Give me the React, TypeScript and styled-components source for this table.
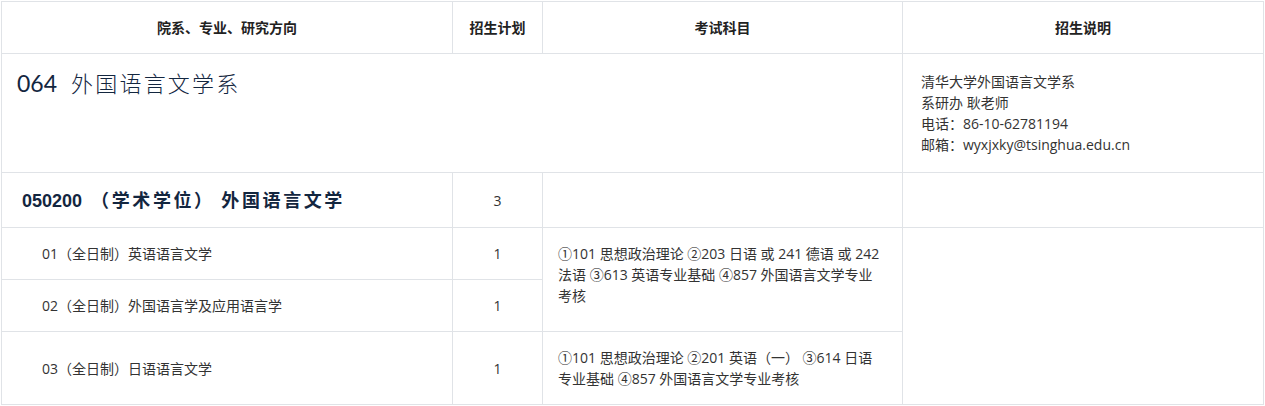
import React from "react";
import styled, { createGlobalStyle } from "styled-components";

const Global = createGlobalStyle`
  html, body { margin: 0; padding: 0; background: #fff; }
  body { font-family: "Open Sans", "Noto Sans CJK SC", sans-serif; }
`;

const Page = styled.div`
  padding: 1px 0 0 1px;
`;

const Table = styled.div`
  display: grid;
  grid-template-columns: 450px 89px 359px 360px;
  grid-template-rows: 51px 118px 54px 51px 51px 72px;
  gap: 1px;
  padding: 1px;
  width: max-content;
  background: #e0e3e7;
`;

type CellProps = { $col: string; $row: string; $align?: "left" | "center"; $valign?: "start" | "center"; $pad?: string };

const Cell = styled.div<CellProps>`
  grid-column: ${(p) => p.$col};
  grid-row: ${(p) => p.$row};
  background: #fff;
  display: flex;
  flex-direction: column;
  justify-content: ${(p) => (p.$valign === "start" ? "flex-start" : "center")};
  align-items: ${(p) => (p.$align === "center" ? "center" : "flex-start")};
  text-align: ${(p) => p.$align ?? "left"};
  padding: ${(p) => p.$pad ?? "0"};
  box-sizing: border-box;
  color: #333;
  font-size: 14px;
  line-height: 21px;
  min-width: 0;
`;

const HeadText = styled.span`
  font-weight: 700;
  font-size: 14px;
  color: #222;
`;

const DeptTitle = styled.div`
  font-size: 22px;
  line-height: 32px;
  color: #13263f;
  font-weight: 400;
`;

const DeptCode = styled.span`
  font-family: Lato, "Noto Sans CJK SC", sans-serif;
  font-size: 23px;
  margin-right: 14px;
`;

const DeptName = styled.span`
  font-family: "Noto Sans CJK SC", sans-serif;
  font-weight: 300;
  letter-spacing: 2.2px;
`;

const MajorTitle = styled.div`
  font-size: 18px;
  line-height: 26px;
  font-weight: 700;
  color: #13263f;
  font-family: "Liberation Sans", "Noto Sans CJK SC", sans-serif;
  white-space: nowrap;
`;

const MajorName = styled.span`
  font-family: "Noto Sans CJK SC", sans-serif;
  letter-spacing: 2.6px;
  margin-left: 4px;
`;

const Line = styled.div``;

export default function App() {
  return (
    <>
      <Global />
      <Page>
        <Table>
          <Cell $col="1" $row="1" $align="center"><HeadText>院系、专业、研究方向</HeadText></Cell>
          <Cell $col="2" $row="1" $align="center"><HeadText>招生计划</HeadText></Cell>
          <Cell $col="3" $row="1" $align="center"><HeadText>考试科目</HeadText></Cell>
          <Cell $col="4" $row="1" $align="center"><HeadText>招生说明</HeadText></Cell>

          <Cell $col="1 / span 3" $row="2" $valign="start" $pad="12px 15px">
            <DeptTitle>
              <DeptCode>064</DeptCode>
              <DeptName>外国语言文学系</DeptName>
            </DeptTitle>
          </Cell>
          <Cell $col="4" $row="2" $pad="0 18px">
            <Line>清华大学外国语言文学系</Line>
            <Line>系研办 耿老师</Line>
            <Line>电话：86-10-62781194</Line>
            <Line>邮箱：wyxjxky@tsinghua.edu.cn</Line>
          </Cell>

          <Cell $col="1" $row="3" $pad="0 20px">
            <MajorTitle>
              050200 <MajorName>（学术学位） 外国语言文学</MajorName>
            </MajorTitle>
          </Cell>
          <Cell $col="2" $row="3" $align="center">3</Cell>
          <Cell $col="3" $row="3" />
          <Cell $col="4" $row="3" />

          <Cell $col="1" $row="4" $pad="0 40px">01（全日制）英语语言文学</Cell>
          <Cell $col="2" $row="4" $align="center">1</Cell>
          <Cell $col="3" $row="4 / span 2" $pad="0 15px 11px 15px">
            <Line>①101 思想政治理论 ②203 日语 或 241 德语 或 242</Line>
            <Line>法语 ③613 英语专业基础 ④857 外国语言文学专业</Line>
            <Line>考核</Line>
          </Cell>
          <Cell $col="4" $row="4 / span 3" />

          <Cell $col="1" $row="5" $pad="0 40px">02（全日制）外国语言学及应用语言学</Cell>
          <Cell $col="2" $row="5" $align="center">1</Cell>

          <Cell $col="1" $row="6" $pad="0 40px">03（全日制）日语语言文学</Cell>
          <Cell $col="2" $row="6" $align="center">1</Cell>
          <Cell $col="3" $row="6" $pad="0 15px">
            <Line>①101 思想政治理论 ②201 英语（一） ③614 日语</Line>
            <Line>专业基础 ④857 外国语言文学专业考核</Line>
          </Cell>
        </Table>
      </Page>
    </>
  );
}
